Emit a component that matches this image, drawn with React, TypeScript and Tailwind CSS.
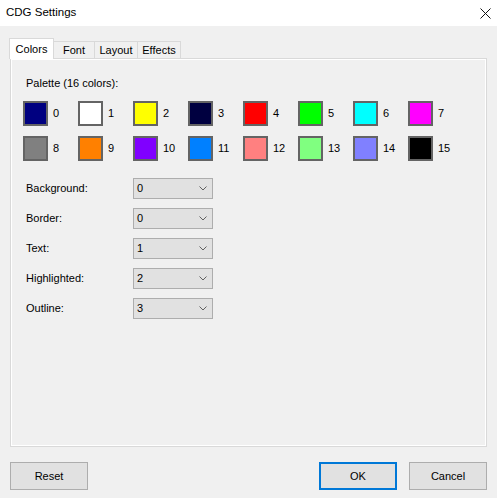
const palette = [
  "#000080",
  "#ffffff",
  "#ffff00",
  "#000040",
  "#ff0000",
  "#00ff00",
  "#00ffff",
  "#ff00ff",
  "#808080",
  "#ff8000",
  "#8000ff",
  "#0080ff",
  "#ff8080",
  "#80ff80",
  "#8080ff",
  "#000000",
];

const fields = [
  { label: "Background:", value: "0" },
  { label: "Border:", value: "0" },
  { label: "Text:", value: "1" },
  { label: "Highlighted:", value: "2" },
  { label: "Outline:", value: "3" },
];

function Chevron() {
  return (
    <svg width="8" height="5" viewBox="0 0 8 5" className="shrink-0">
      <path d="M0.5 0.5 L4 4 L7.5 0.5" fill="none" stroke="#606060" strokeWidth="1" />
    </svg>
  );
}

function Combo({ value }: { value: string }) {
  return (
    <div className="flex h-[21px] w-[80px] items-center justify-between border border-[#adadad] bg-[#e1e1e1] pl-[3px] pr-[5px]">
      <span>{value}</span>
      <Chevron />
    </div>
  );
}

function Button({ label, primary }: { label: string; primary?: boolean }) {
  return (
    <button
      className={
        primary
          ? "flex h-[28px] w-[78px] items-center justify-center border-2 border-[#0078d7] bg-[#e1e1e1]"
          : "flex h-[28px] w-[78px] items-center justify-center border border-[#adadad] bg-[#e1e1e1]"
      }
    >
      {label}
    </button>
  );
}

export default function App() {
  return (
    <div
      className="flex h-[498px] w-[497px] flex-col bg-[#f0f0f0] text-[11px] text-black"
      style={{ fontFamily: '"Liberation Sans", Arial, sans-serif' }}
    >
      {/* title bar */}
      <div className="flex h-[26px] items-center justify-between bg-white pl-[6px] pr-[6px]">
        <span className="text-[11.5px]">CDG Settings</span>
        <svg width="11" height="11" viewBox="0 0 11 11">
          <path d="M0.5 0.5 L10.5 10.5 M10.5 0.5 L0.5 10.5" stroke="#111" strokeWidth="1" />
        </svg>
      </div>

      {/* tabs */}
      <div className="mt-[12px] flex items-end pl-[9px]">
        <div className="relative z-10 -mb-px flex h-[21px] w-[45px] items-center justify-center border border-b-0 border-[#d9d9d9] bg-white">
          Colors
        </div>
        <div className="flex h-[17px] w-[41px] items-center justify-center border border-l-0 border-b-0 border-[#d9d9d9]">
          Font
        </div>
        <div className="flex h-[17px] w-[43px] items-center justify-center border border-l-0 border-b-0 border-[#d9d9d9]">
          Layout
        </div>
        <div className="flex h-[17px] w-[43px] items-center justify-center border border-l-0 border-b-0 border-[#d9d9d9]">
          Effects
        </div>
      </div>

      {/* tab page */}
      <div className="mx-[10px] h-[389px] border border-[#d9d9d9] shadow-[inset_1px_1px_0_#fff,inset_-1px_-1px_0_#fff] pl-[12px] pt-[16px]">
        <div className="pl-[3px]">Palette (16 colors):</div>

        <div className="mt-[9px] grid grid-cols-[repeat(8,55px)] gap-y-[10px]">
          {palette.map((c, i) => (
            <div key={i} className="flex items-center">
              <div className="h-[25px] w-[25px] border-2 border-[#646464]" style={{ background: c }} />
              <span className="ml-[5px]">{i}</span>
            </div>
          ))}
        </div>

        <div className="mt-[17px] flex flex-col gap-[9px] pl-[3px]">
          {fields.map((f) => (
            <div key={f.label} className="flex items-center">
              <span className="w-[107px]">{f.label}</span>
              <Combo value={f.value} />
            </div>
          ))}
        </div>
      </div>

      {/* buttons */}
      <div className="mt-[15px] flex items-center px-[10px]">
        <Button label="Reset" />
        <div className="flex-1" />
        <Button label="OK" primary />
        <div className="w-[12px]" />
        <Button label="Cancel" />
      </div>
    </div>
  );
}
